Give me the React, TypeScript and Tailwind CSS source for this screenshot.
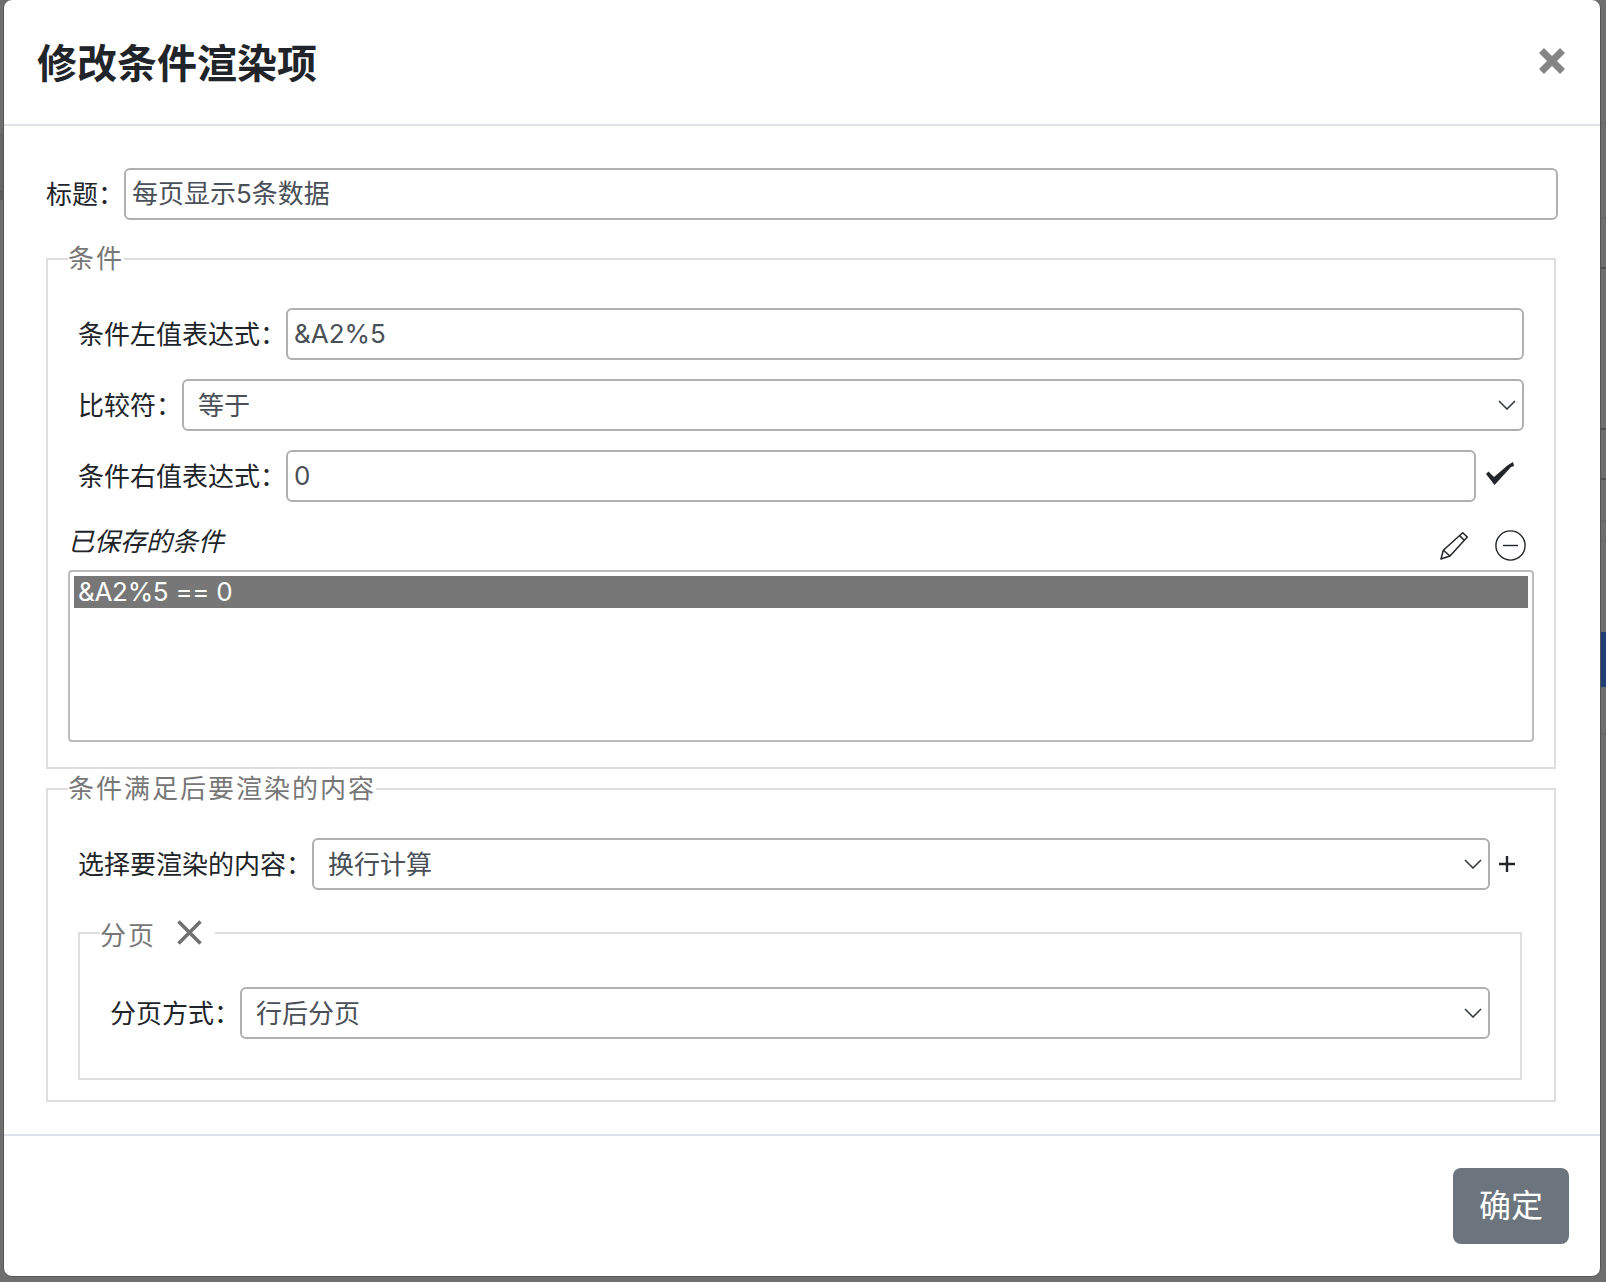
import React from 'react';

const font = "font-['Inter','Noto_Sans_CJK_SC',sans-serif]";

// table rows of the page behind the overlay, they peek out at the right edge
const backdropRows = [
  { y: 122, cls: 'bg-[#666]' },
  { y: 217, cls: 'bg-[#666]' },
  { y: 267, cls: 'bg-[#505050]' },
  { y: 428, cls: 'bg-[#505050]' },
  { y: 478, cls: 'bg-[#505050]' },
  { y: 520, cls: 'bg-[#666]' },
  { y: 540, cls: 'bg-[#666]' },
  { y: 733, cls: 'bg-[#666]' },
];

function Chevron() {
  return (
    <svg viewBox="0 0 18 10" className="pointer-events-none absolute right-[8px] top-[21px] h-[10px] w-[18px]" fill="none" stroke="#343a40" strokeWidth="1.6">
      <path d="M1 1l8 8 8-8" />
    </svg>
  );
}

function TextInput({ value, pad = 'pb-[1px]' }: { value: string; pad?: string }) {
  return (
    <input
      readOnly
      value={value}
      className={`h-[52px] min-w-0 flex-1 rounded-[6px] border-2 border-[#b0b0b0] bg-white px-[6px] ${pad} text-[26px] text-[#495057] outline-none`}
    />
  );
}

function Select({ value }: { value: string }) {
  return (
    <div className="relative min-w-0 flex-1">
      <select
        value={value}
        onChange={() => {}}
        className="h-[52px] w-full appearance-none rounded-[6px] border-2 border-[#b0b0b0] bg-white pl-[14px] pr-[30px] text-[26px] text-[#495057] outline-none"
      >
        <option>{value}</option>
      </select>
      <Chevron />
    </div>
  );
}

function Label({ children }: { children: React.ReactNode }) {
  return <label className="shrink-0 self-center whitespace-nowrap text-[26px] leading-[39px] text-[#212529]">{children}</label>;
}

export default function App() {
  return (
    <div className={`${font} h-[1282px] overflow-hidden bg-[#6e6e6e]`}>
      <div className="relative h-[1282px]">
        <div className="absolute left-0 top-[133px] h-[57px] w-[3px] bg-[#666]" />
        <div className="absolute left-0 top-[190px] h-[10px] w-[3px] bg-[#5c5c5c]" />
        {backdropRows.map((row) => (
          <div key={row.y} className={`absolute right-0 h-[2px] w-[6px] ${row.cls}`} style={{ top: row.y }} />
        ))}
        <div className="absolute right-0 top-[632px] h-[55px] w-[6px] bg-[#1f3f75]" />

        <div className="relative ml-[3px] mr-[5px] h-[1278px] -translate-y-px rounded-[9px] border border-[#555] bg-white">
          <div className="flex h-[126px] items-center justify-between border-b-2 border-[#dee2e6] pl-[33px] pr-[35px]">
            <h5 className="mt-[3px] text-[40px] font-semibold leading-[60px] text-[#212529]">修改条件渲染项</h5>
            <svg viewBox="0 0 26 26" className="-mt-[3px] h-[26px] w-[26px]" fill="none" stroke="#858585" strokeWidth="7">
              <path d="M2.5 2.5l21 21M23.5 2.5l-21 21" />
            </svg>
          </div>

          <div className="pl-[42px] pr-[44px] pt-[42px]">
            <div className="-mr-[2px] flex">
              <Label>标题：</Label>
              <TextInput value="每页显示5条数据" pad="pb-[5px]" />
            </div>

            <fieldset className="mt-[19px] border-2 border-[#dedede] pb-[25px] pl-[20px] pr-[20px] pt-[30px]">
              <legend className="text-[26px] leading-[39px] tracking-[2px] text-[#777]">条件</legend>
              <div className="flex flex-col gap-[19px] pl-[10px] pr-[10px]">
                <div className="flex">
                  <Label>条件左值表达式：</Label>
                  <TextInput value="&A2%5" />
                </div>
                <div className="flex">
                  <Label>比较符：</Label>
                  <Select value="等于" />
                </div>
                <div className="flex">
                  <Label>条件右值表达式：</Label>
                  <TextInput value="0" />
                  <div className="w-[48px] pl-[10px] pt-[12px]">
                    <svg viewBox="0 0 28 23" className="h-[23px] w-[28px]" fill="#212529">
                      <path d="M0 12l2.500-2.500L8 15 22 3l5-3 1 4-3 1L8.500 23z" />
                    </svg>
                  </div>
                </div>
              </div>

              <div className="mt-[20px] flex h-[48px] items-start justify-between">
                <em className="text-[26px] leading-[39px] text-[#212529]">已保存的条件</em>
                <div className="mr-[8px] mt-[8px] flex items-center gap-[27px]">
                  <svg viewBox="0 0 28 28" className="h-[28px] w-[28px]" fill="none" stroke="#212529" strokeWidth="1.500" strokeLinejoin="round">
                    <path d="M1 27l2.300-8.700L22.700.700 27.300 5 10 24z" />
                    <path d="M3.300 18.300 10 24M19.500 3.500 24 8" />
                  </svg>
                  <svg viewBox="0 0 31 31" className="h-[31px] w-[31px]" fill="none" stroke="#212529" strokeWidth="1.400">
                    <circle cx="15.500" cy="15.500" r="14.600" />
                    <path d="M8 15.500h15" />
                  </svg>
                </div>
              </div>
              <select
                multiple
                value={['0']}
                onChange={() => {}}
                className="block h-[172px] w-full rounded-[4px] border-2 border-[#bcbcbc] bg-white p-[4px] text-[26px] tracking-[-0.3px] text-[#495057] outline-none"
              >
                <option value="0" className="h-[32px] bg-[#777] px-[4px] leading-[32px] text-white checked:bg-[#777]">&amp;A2%5 == 0</option>
              </select>
            </fieldset>

            <fieldset className="border-2 border-[#dedede] pb-[20px] pl-[20px] pr-[32px] pt-[30px]">
              <legend className="text-[26px] leading-[39px] tracking-[2px] text-[#777]">条件满足后要渲染的内容</legend>
              <div className="pl-[10px]">
                <div className="-mr-[3px] flex">
                  <Label>选择要渲染的内容：</Label>
                  <Select value="换行计算" />
                  <div className="flex w-[35px] items-center pl-[9px]">
                    <svg viewBox="0 0 16 16" className="h-[16px] w-[16px]" stroke="#212529" strokeWidth="2.400">
                      <path d="M8 0v16M0 8h16" />
                    </svg>
                  </div>
                </div>
                <fieldset className="mt-[21px] border-2 border-[#dedede] pb-[39px] pl-[20px] pr-[30px] pt-[32px]">
                  <legend className="flex items-center pr-[13px] text-[26px] leading-[39px] tracking-[1.9px] text-[#777]">
                    <span className="mt-[5px]">分页</span>
                    <svg viewBox="0 0 25 25" className="-mt-px ml-[21px] h-[25px] w-[25px]" fill="none" stroke="#707070" strokeWidth="3.600">
                      <path d="M1.500 1.500l22 22M23.500 1.500l-22 22" />
                    </svg>
                  </legend>
                  <div className="flex pl-[10px]">
                    <Label>分页方式：</Label>
                    <Select value="行后分页" />
                  </div>
                </fieldset>
              </div>
            </fieldset>
          </div>

          <div className="mt-[32px] flex justify-end border-t-2 border-[#dee2e6] pr-[31px] pt-[32px]">
            <button className="h-[76px] w-[116px] rounded-[8px] bg-[#6c757d] text-[32px] text-white">确定</button>
          </div>
        </div>
      </div>
    </div>
  );
}
